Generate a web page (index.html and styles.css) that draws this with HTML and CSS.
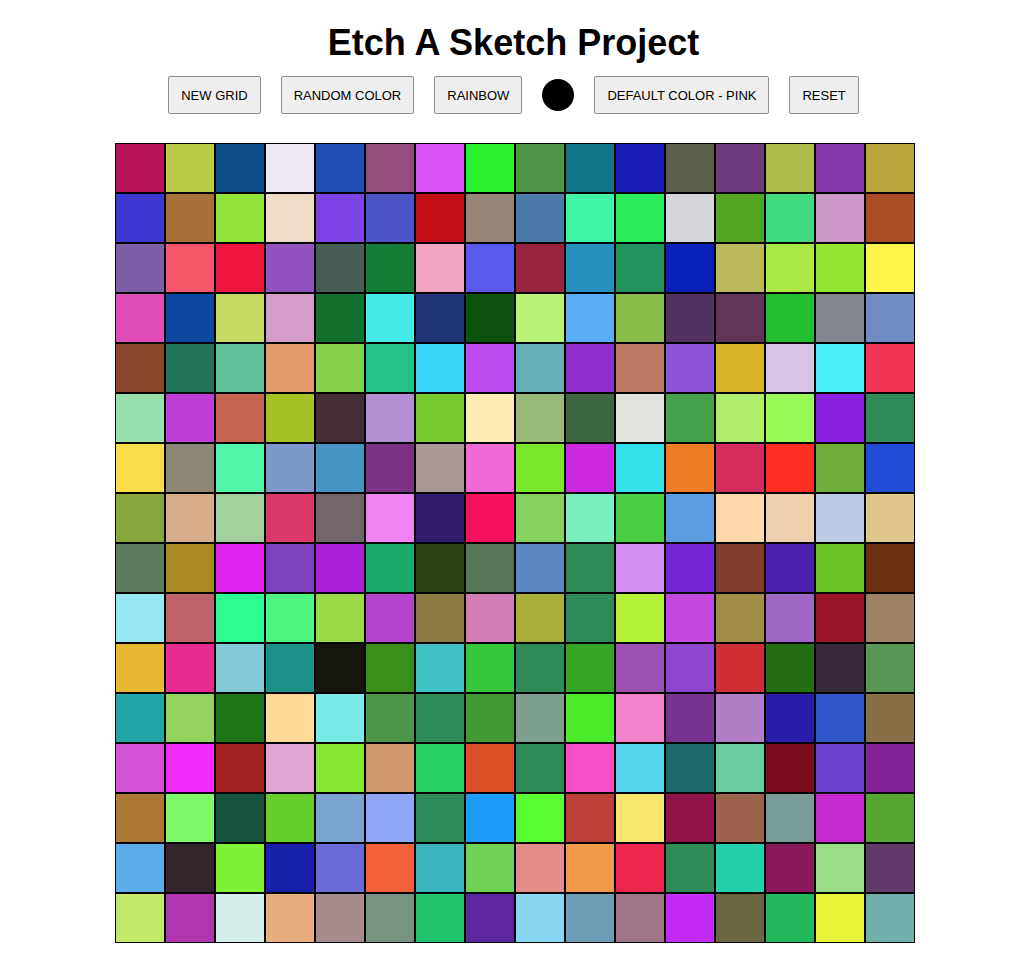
FILE: index.html
```html
<!DOCTYPE html>
<html lang="en">
<head>
<meta charset="utf-8">
<title>Etch A Sketch Project</title>
<link rel="stylesheet" href="styles.css">
</head>
<body>
<div class="page">
  <h1 class="title">Etch A Sketch Project</h1>
  <div class="controls">
    <button class="btn">NEW GRID</button>
    <button class="btn">RANDOM COLOR</button>
    <button class="btn">RAINBOW</button>
    <span class="swatch"></span>
    <button class="btn">DEFAULT COLOR - PINK</button>
    <button class="btn">RESET</button>
  </div>
  <div class="board-wrap">
    <div class="board" id="board"></div>
  </div>
</div>
<script src="script.js"></script>
</body>
</html>
```

FILE: styles.css
```css
* { box-sizing: border-box; }
body {
  margin: 0;
  background: #ffffff;
  font-family: "Liberation Sans", Arial, sans-serif;
  color: #000;
}
.page {
  display: flex;
  flex-direction: column;
  align-items: center;
  padding-top: 21px;
}
.title {
  margin: 0;
  font-size: 36px;
  line-height: 44px;
  font-weight: 700;
}
.controls {
  margin-top: 11px;
  display: flex;
  align-items: center;
  gap: 20px;
}
.btn {
  height: 38px;
  padding: 0 12px;
  font-family: "Liberation Sans", Arial, sans-serif;
  font-size: 13px;
  color: #000;
  background: #efefef;
  border: 1px solid #8f8f8f;
  border-radius: 2px;
}
.swatch {
  width: 32px;
  height: 32px;
  border-radius: 50%;
  background: #000;
}
.board-wrap {
  margin-top: 29px;
  padding-left: 3px;
  align-self: stretch;
  display: flex;
  justify-content: center;
}
.board {
  display: grid;
  grid-template-columns: repeat(16, 50px);
  grid-auto-rows: 50px;
}
.cell {
  border: 1px solid #000;
}
```

FILE: script.js
```js
const colors = [
"b8145a bccc48 10508a eee9f4 204eb2 944e7e da52f6 2af22e 4c9646 13758a 1a1cb8 5c5e4e 6e3a7c b0bc4a 8638aa b8a63a",
"3e38d2 a67038 92e63a eedcc6 7c44e4 4c54c6 c20e14 98857a 4a7aa8 3ef4a6 28ec5a d4d6da 52a622 42da7e cc98ca aa4c26",
"7b60a8 f8566a f01440 9052be 485c56 137d37 f0a4c2 5a5af0 9a2440 2690be 24925e 0820b8 bab85a aae844 92e830 fef44a",
"e04cb8 0c48a0 c4da60 d49cc8 13702e 46eaea 223478 0a520e b8f276 5aaef6 8abc4a 52325e 623458 22c030 82868e 708cc4",
"8a462a 23725a 60c09a e29a68 86d04e 22c288 3ad4f4 bc4cf0 64b0b4 8e2ecc be7862 8c54d6 dab428 d8c4e4 4aeefa f23658",
"96e0ac be3ed8 c66650 a4c224 452e38 b28ed2 76cc2e ffecb2 9aba78 3e6642 e0e2dc 44a24a aeee6a 9afa5a 8c20e2 2e8b57",
"f8dc48 8c8674 50f6a8 7f98cc 4694c2 7b3284 aa9896 f06ad6 78e82a cc28e4 34e2ea ef7d28 d42c5c fe2e22 6eae38 204cd6",
"88a63e d6ac8a a4d09e da3868 72666c f082f2 321c6e f6125e 86d25e 7aeebe 4ad042 5a9ce0 fcd8aa eed0ae bccae6 e0c68a",
"5e7c62 aa8a22 e224f0 8042bc ac20d8 1aaa6c 2c4012 56765a 5a88c2 2e8b57 d48ef4 7426d6 823e2a 4a20b0 6cc428 6a3012",
"96e6f4 c0626c 2efe92 4ef680 9ad846 b444cc 8c7c42 d47cb6 a8ae36 2e8b57 b6f23a c248e0 a08e46 a066c4 9c1428 9e8264",
"e8b832 e82c92 82cad6 1c918a 16160e 3a8e1a 40c2c4 36c63a 2e8b57 36a626 9e52b4 8e44ce ce2e34 246e12 382a3a 589656",
"20a6a6 92d25e 207616 ffda96 7aeae8 4c964a 2e8b57 449a32 7e9e8e 4eea2c f282cc 7a3290 b27ec8 281ca8 2e58ca 886e44",
"d452d6 f02af8 a02220 e0a4d2 86e834 d29a6c 24d060 e05028 2e8b57 f84ec6 52d4ea 1c6a6a 6acca0 7a0e1e 6a42cc 822498",
"ac7a36 7ef86a 14543c 64ce2a 7aa4d2 90a4f8 2e8b57 1e9cfa 58fe32 be403a f8e66a 901448 9c624c 7a9c98 c828d0 56a632",
"5cacea 32262c 80f236 1820aa 6a6ad8 f4603a 3cb6bc 72d256 e48c8a f09a4c ec264c 2e8b57 22d0aa 8a1a5c 98de86 623a6a",
"c4e96a b036b0 d6eeec e8ae7e a68c8c 799480 20c46c 5c269e 88d6f2 6c9eb8 9e7688 c42af8 6a663e 22b85c e6f43a 70b0aa"
];
const board = document.getElementById("board");
colors.forEach(row => {
  row.split(" ").forEach(hex => {
    const cell = document.createElement("div");
    cell.className = "cell";
    cell.style.backgroundColor = "#" + hex;
    board.appendChild(cell);
  });
});
```
